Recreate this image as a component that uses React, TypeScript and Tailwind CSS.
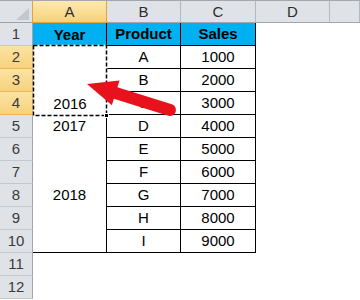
import * as React from 'react';

const cols = ['A', 'B', 'C', 'D', 'E'];

// rows 2..10 of the sheet
const data: [string, string, string][] = [
  ['', 'A', '1000'],
  ['', 'B', '2000'],
  ['2016', 'C', '3000'],
  ['2017', 'D', '4000'],
  ['', 'E', '5000'],
  ['', 'F', '6000'],
  ['2018', 'G', '7000'],
  ['', 'H', '8000'],
  ['', 'I', '9000'],
];

const selectedRows = [2, 3, 4];

function RowHeader({ n }: { n: number }) {
  const selected = selectedRows.includes(n);
  return (
    <div
      className={
        selected
          ? 'flex items-center justify-center border-r border-b border-r-[#e2a33c] border-b-[#e9b656] bg-gradient-to-b from-[#fbe3a3] to-[#f8d27c] pt-[1px] text-[15px] text-[#3b3b3b]'
          : 'flex items-center justify-center border-r border-b border-r-[#9ea5ae] border-b-[#c4c9d0] bg-[#dfe3e8] pt-[1px] text-[15px] text-[#3b3b3b]'
      }
    >
      {n}
    </div>
  );
}

function Cell({
  children,
  className,
}: {
  children?: React.ReactNode;
  className: string;
}) {
  return (
    <div className={'flex items-end justify-center leading-[17px] text-[15px] text-black ' + className}>
      {children}
    </div>
  );
}

export default function App() {
  return (
    <div
      className="relative h-[300px] w-[360px] overflow-hidden bg-white"
      style={{ fontFamily: '"Liberation Sans", Arial, sans-serif' }}
    >
      <div className="grid grid-cols-[33px_74px_74px_75px_74px_30px] grid-rows-[repeat(13,23px)]">
        {/* corner */}
        <div className="relative border-t border-r border-b border-t-[#a3a8ae] border-r-[#e2a33c] border-b-[#9ea5ae] bg-[#dfe3e8]">
          <svg className="absolute left-0 top-0" width="33" height="23" viewBox="0 0 33 23">
            <polygon points="29,7 29,19 16,19" fill="#c3c8ce" />
          </svg>
        </div>

        {/* column headers */}
        {cols.map((c) => (
          <div
            key={c}
            className={
              c === 'A'
                ? 'flex items-end justify-center border-t border-r border-b border-t-[#a3a8ae] border-r-[#e2a33c] border-b-[#e2a33c] bg-gradient-to-b from-[#fde9ae] to-[#f8d27a] pb-[2px] leading-[17px] text-[15px] text-[#2e2e2e]'
                : 'flex items-end justify-center border-t border-r border-b border-t-[#a3a8ae] border-r-[#b2b8c0] border-b-[#9ea5ae] bg-[#dfe3e8] pb-[2px] leading-[17px] text-[15px] text-[#2e2e2e]'
            }
          >
            {c === 'E' ? '' : c}
          </div>
        ))}

        {/* row 1: table header */}
        <RowHeader n={1} />
        <Cell className="border-r border-black bg-[#00b0f0] pb-[3px] font-bold">Year</Cell>
        <Cell className="border-r border-b border-black bg-[#00b0f0] pb-[3px] font-bold">Product</Cell>
        <Cell className="border-r border-b border-black bg-[#00b0f0] pb-[3px] font-bold">Sales</Cell>
        <div />
        <div />

        {/* rows 2..10 */}
        {data.map(([year, product, sales], i) => {
          const n = i + 2;
          const last = n === 10;
          return (
            <React.Fragment key={n}>
              <RowHeader n={n} />
              <Cell
                className={
                  n <= 4
                    ? 'pb-[3px]'
                    : last
                      ? 'border-r border-b border-black pb-[3px]'
                      : 'border-r border-black pb-[4px]'
                }
              >
                {year}
              </Cell>
              <Cell className="border-r border-b border-black pb-[3px]">{product}</Cell>
              <Cell className="border-r border-b border-black pb-[3px]">{sales}</Cell>
              <div />
              <div />
            </React.Fragment>
          );
        })}

        {/* rows 11, 12 */}
        {[11, 12].map((n) => (
          <React.Fragment key={n}>
            <RowHeader n={n} />
            <div />
            <div />
            <div />
            <div />
            <div />
          </React.Fragment>
        ))}
      </div>

      {/* copy marquee around A2:A4 and arrow on top */}
      <svg className="pointer-events-none absolute left-0 top-0" width="360" height="300" viewBox="0 0 360 300">
        <rect x="33.5" y="45.5" width="73" height="70" fill="none" stroke="#ffffff" strokeWidth="1.5" />
        <rect
          x="33.5"
          y="45.5"
          width="73"
          height="70"
          fill="none"
          stroke="#000000"
          strokeWidth="1.5"
          strokeDasharray="4 2"
        />
        <rect x="104.5" y="113.5" width="4" height="4" fill="#000000" stroke="#ffffff" strokeWidth="1" />
        <line x1="170" y1="110" x2="114" y2="92.5" stroke="#e8121c" strokeWidth="12" strokeLinecap="round" />
        <polygon points="87,84 119.5,80.4 111.9,105.2" fill="#e8121c" />
      </svg>
    </div>
  );
}
